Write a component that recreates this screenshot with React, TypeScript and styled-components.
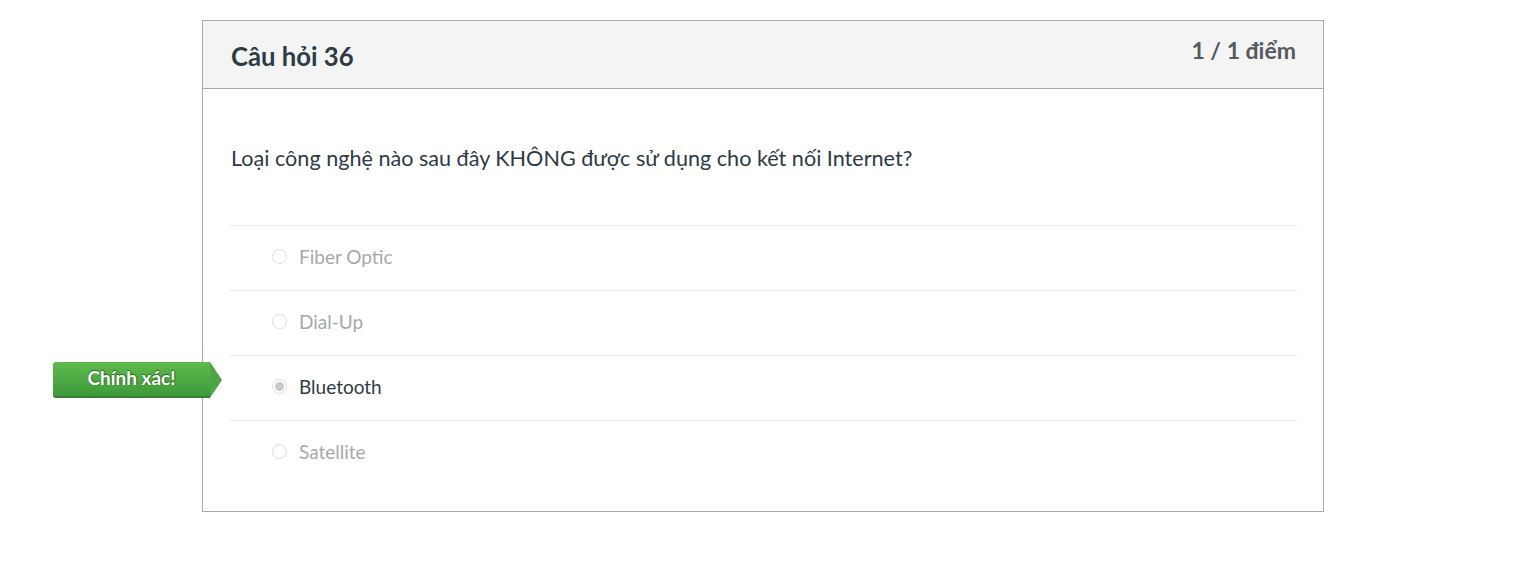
import React from "react";
import styled, { createGlobalStyle } from "styled-components";

const GlobalStyle = createGlobalStyle`
  html, body {
    margin: 0;
    padding: 0;
    background: #ffffff;
    font-family: Lato, "Noto Sans", sans-serif;
    color: #2d3b45;
  }
`;

const answers = [
  { id: 1, text: "Fiber Optic", selected: false },
  { id: 2, text: "Dial-Up", selected: false },
  { id: 3, text: "Bluetooth", selected: true },
  { id: 4, text: "Satellite", selected: false },
];

const Page = styled.div`
  padding: 20px 0 0 202px;
`;

const QuestionBox = styled.div`
  width: 1120px;
  border: 1px solid #aaaaaa;
  background: #ffffff;
`;

const Header = styled.div`
  display: flex;
  justify-content: space-between;
  align-items: flex-start;
  height: 68px;
  box-sizing: border-box;
  padding: 0 27px 0 28px;
  background: #f4f4f4;
  border-bottom: 1px solid #aaaaaa;
`;

const Title = styled.h2`
  margin: 19px 0 0;
  font-size: 25.7px;
  line-height: 32px;
  font-weight: 700;
  color: #2d3b45;
`;

const Score = styled.div`
  margin-top: 15px;
  font-size: 23px;
  line-height: 28px;
  font-weight: 700;
  color: #555a5f;
`;

const Body = styled.div`
  padding: 54px 26px 26px 27px;
`;

const QuestionText = styled.p`
  margin: 0 0 52px 1px;
  font-size: 21.6px;
  line-height: 30px;
  color: #2d3b45;
`;

const AnswerList = styled.div`
  display: flex;
  flex-direction: column;
`;

const AnswerRow = styled.div`
  position: relative;
  display: flex;
  align-items: center;
  gap: 12px;
  height: 64px;
  padding-left: 42px;
  border-top: 1px solid #e6e6e6;
`;

const Radio = styled.span<{ $checked: boolean }>`
  position: relative;
  width: 15px;
  height: 15px;
  box-sizing: border-box;
  border-radius: 50%;
  border: 1px solid #dcdcdc;
  background: #ffffff;
  margin-top: -4px;
  &::after {
    content: "";
    position: absolute;
    inset: 2px;
    border-radius: 50%;
    background: ${(p) => (p.$checked ? "#c8c8c8" : "transparent")};
  }
`;

const AnswerLabel = styled.span<{ $checked: boolean }>`
  margin-top: -2px;
  font-size: 19px;
  line-height: 24px;
  color: ${(p) => (p.$checked ? "#2d3b45" : "#a5a9ac")};
`;

const Flag = styled.div`
  position: absolute;
  left: -177px;
  top: 6px;
  display: flex;
  align-items: center;
`;

const FlagBody = styled.div`
  width: 157px;
  height: 36px;
  box-sizing: border-box;
  display: flex;
  align-items: center;
  justify-content: center;
  padding-bottom: 4px;
  border-radius: 3px 0 0 3px;
  background: linear-gradient(#5fba4d, #3e9a3a);
  border-bottom: 2px solid #357f34;
  font-size: 19px;
  font-weight: 700;
  color: #ffffff;
  text-shadow: 0 -1px 1px #2b6d26, 1px 0 1px #2b6d26;
`;

const FlagTip = styled.div`
  width: 0;
  height: 0;
  border-top: 18px solid transparent;
  border-bottom: 18px solid transparent;
  border-left: 12px solid #4aa542;
`;

export default function App() {
  return (
    <Page>
      <GlobalStyle />
      <QuestionBox>
        <Header>
          <Title>Câu hỏi 36</Title>
          <Score>1 / 1 điểm</Score>
        </Header>
        <Body>
          <QuestionText>
            Loại công nghệ nào sau đây KHÔNG được sử dụng cho kết nối Internet?
          </QuestionText>
          <AnswerList>
            {answers.map((a) => (
              <AnswerRow key={a.id}>
                {a.selected && (
                  <Flag>
                    <FlagBody>Chính xác!</FlagBody>
                    <FlagTip />
                  </Flag>
                )}
                <Radio $checked={a.selected} />
                <AnswerLabel $checked={a.selected}>{a.text}</AnswerLabel>
              </AnswerRow>
            ))}
          </AnswerList>
        </Body>
      </QuestionBox>
    </Page>
  );
}
